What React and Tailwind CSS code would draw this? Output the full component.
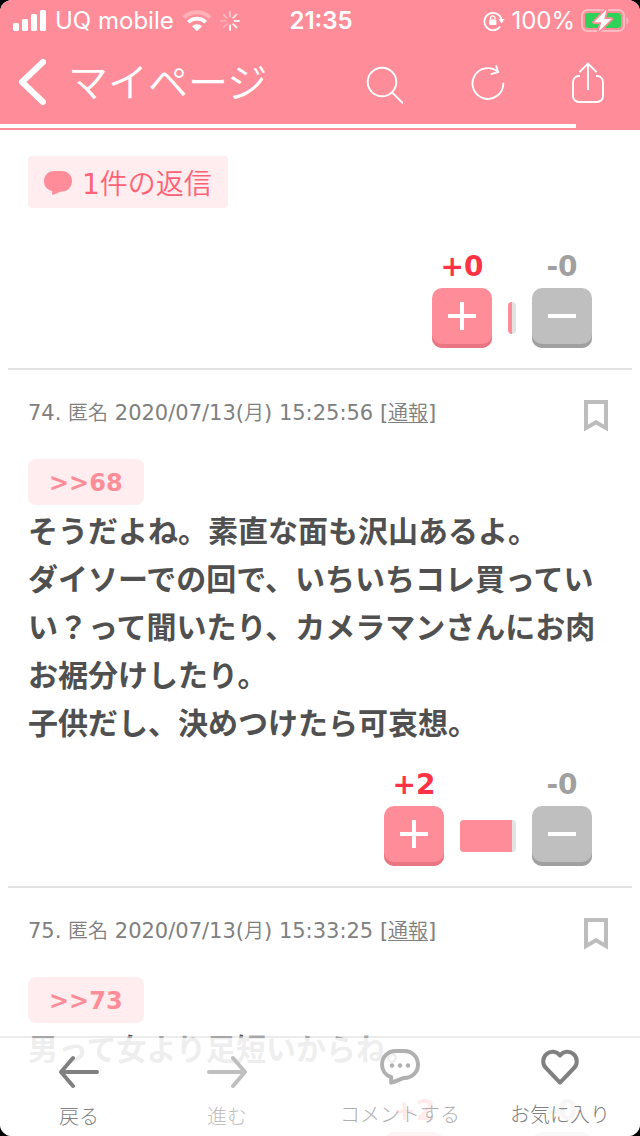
import React from "react";

const SANS = "font-['DejaVu_Sans','Noto_Sans_CJK_JP',sans-serif]";
const JP = "font-['Noto_Sans_CJK_JP',sans-serif]";

function SignalIcon() {
  return (
    <svg width="34" height="22" viewBox="0 0 34 22" fill="#fff" aria-hidden="true">
      <rect x="0" y="13" width="6" height="8" rx="1.5" />
      <rect x="9" y="9" width="6" height="12" rx="1.5" />
      <rect x="18" y="4" width="6" height="17" rx="1.5" />
      <rect x="27" y="0" width="6" height="21" rx="1.5" />
    </svg>
  );
}

function WifiIcon() {
  return (
    <svg width="30" height="22" viewBox="0 0 30 22" aria-hidden="true">
      <path d="M2 7.6a18.5 18.5 0 0 1 26 0" fill="none" stroke="#fff" strokeOpacity=".3" strokeWidth="4" />
      <path d="M6.3 12.2a12.3 12.3 0 0 1 17.4 0" fill="none" stroke="#fff" strokeWidth="3.6" />
      <path d="M10 16.2a7.2 7.2 0 0 1 10 0l-5 5z" fill="#fff" />
    </svg>
  );
}

function SpinnerIcon() {
  return (
    <svg width="20" height="20" viewBox="0 0 20 20" stroke="#fff" strokeWidth="1.8" strokeLinecap="round" aria-hidden="true">
      <path d="M10 1v4.6" opacity=".5" />
      <path d="M16.4 3.6l-3.2 3.2" opacity=".75" />
      <path d="M19 10h-4.6" opacity=".85" />
      <path d="M16.4 16.4l-3.2-3.2" opacity=".95" />
      <path d="M10 19v-4.6" />
      <path d="M3.6 16.4l3.2-3.2" opacity=".25" />
      <path d="M1 10h4.6" opacity=".25" />
      <path d="M3.6 3.6l3.2 3.2" opacity=".35" />
    </svg>
  );
}

function LockIcon() {
  return (
    <svg width="22" height="20" viewBox="0 0 22 20" fill="none" stroke="#fff" aria-hidden="true">
      <path d="M17.2 15.6A8.7 8.7 0 1 1 18.4 8" strokeWidth="1.8" />
      <path d="M15.4 8h6.2l-3 4.4z" fill="#fff" stroke="none" />
      <rect x="6.2" y="8.4" width="7.2" height="5.6" rx="1" fill="#fff" stroke="none" />
      <path d="M7.7 8.6V7a2.1 2.1 0 0 1 4.2 0v1.6" strokeWidth="1.3" />
    </svg>
  );
}

function BatteryIcon() {
  return (
    <svg width="48" height="24" viewBox="0 0 48 24" aria-hidden="true">
      <rect x="1" y="1" width="42" height="21" rx="5.5" fill="none" stroke="#fff" strokeOpacity=".4" strokeWidth="2" />
      <path d="M45.5 8.2c2.6 1 2.6 6 0 7z" fill="#fff" fillOpacity=".4" />
      <rect x="4" y="4" width="36" height="15" rx="3" fill="#30d158" />
      <path d="M25.6.4L13 13.2h7.4L17.6 22.6 30.4 10h-7.2z" fill="#fff" stroke="#ff8d99" strokeWidth="3.4" strokeLinejoin="round" paintOrder="stroke" />
    </svg>
  );
}

function StatusBar() {
  return (
    <div className="grid h-10 grid-cols-[1fr_auto_1fr] items-center pl-[13px] pr-[11px] pt-px font-['Inter',sans-serif] text-2xl text-white">
      <div className="flex items-center gap-2">
        <SignalIcon />
        <span>UQ mobile</span>
        <span className="flex items-center gap-2">
          <WifiIcon />
          <SpinnerIcon />
        </span>
      </div>
      <span className="font-semibold">21:35</span>
      <div className="flex items-center justify-end gap-1.5">
        <LockIcon />
        <span>100%</span>
        <BatteryIcon />
      </div>
    </div>
  );
}

function Header() {
  return (
    <header className="shrink-0 bg-[#ff8d99]">
      <StatusBar />
      <div className="flex h-[84px] items-center pl-[18px] pr-[35px] text-white">
        <button aria-label="戻る" className="mr-[22px]">
          <svg width="28" height="48" viewBox="0 0 28 48" fill="none" stroke="#fff" strokeWidth="6" strokeLinecap="round" strokeLinejoin="round">
            <path d="M25 4L4 24l21 20" />
          </svg>
        </button>
        <h1 className={`${JP} pb-1 text-[40px] leading-[48px] font-[350]`}>マイページ</h1>
        <div className="ml-auto flex items-center gap-[66px]">
          <button aria-label="検索">
            <svg width="44" height="46" viewBox="0 0 44 46" fill="none" stroke="#fff" strokeWidth="1.9">
              <circle cx="23" cy="23" r="14.3" />
              <path d="M32.8 33.2L44 44.4" />
            </svg>
          </button>
          <button aria-label="再読み込み">
            <svg width="36" height="38" viewBox="0 0 36 38" fill="none" stroke="#fff" strokeWidth="1.9" strokeLinecap="round">
              <path d="M34.300 20.500A15.400 15.400 0 1 1 29 8.900" />
              <path d="M27.200 3l2 6-6.800 2.200" />
            </svg>
          </button>
          <button aria-label="共有">
            <svg width="34" height="44" viewBox="0 -2 34 44" fill="none" stroke="#fff" strokeWidth="1.9">
              <path d="M9 14H7.6A6.1 6.1 0 0 0 2 20v14a6 6 0 0 0 6 6h18a6 6 0 0 0 6-6V20a6.1 6.1 0 0 0-5.6-6H25" />
              <path d="M17 28V1.5M8.4 10.2L17 1.6l8.6 8.6" />
            </svg>
          </button>
        </div>
      </div>
      <div className="h-1.5">
        <div className="h-1 w-[90%] bg-white" />
      </div>
    </header>
  );
}

function Votes({ plus, minus, wide }) {
  const base = "flex h-[60px] w-[60px] items-center justify-center rounded-[10px] pb-1";
  return (
    <div className="flex items-end justify-end gap-4 pr-5 pb-5">
      <div className="flex w-[60px] flex-col items-center gap-1">
        <span className={`${SANS} text-[28px] leading-[34px] font-bold text-[#ff3344]`}>{plus}</span>
        <button aria-label="プラス" className={`${base} bg-[#ff8d99] shadow-[inset_0_-4px_0_#e97683]`}>
          <svg width="28" height="28" viewBox="0 0 28 28" fill="#fff">
            <path d="M12 0h4v12h12v4H16v12h-4V16H0v-4h12z" />
          </svg>
        </button>
      </div>
      <div className={`mb-3.5 flex h-8 overflow-hidden rounded bg-[#e2e2e2] ${wide ? "w-14" : "w-2"}`}>
        <div className="mr-1 grow bg-[#ff8d99]" />
      </div>
      <div className="flex w-[60px] flex-col items-center gap-1">
        <span className={`${SANS} text-[28px] leading-[34px] font-bold text-[#a0a0a0]`}>{minus}</span>
        <button aria-label="マイナス" className={`${base} bg-[#bfbfbf] shadow-[inset_0_-4px_0_#a0a0a0]`}>
          <svg width="28" height="28" viewBox="0 0 28 28" fill="#fff">
            <path d="M0 12h28v4H0z" />
          </svg>
        </button>
      </div>
    </div>
  );
}

function Kanji({ children }) {
  return <span className={`${JP} text-xl leading-none font-[350]`}>{children}</span>;
}

function Comment({ number, time, anchor, lines }) {
  return (
    <article className="mx-2 border-b-2 border-[#e2e2e2] px-5 pt-[30px]">
      <div className="flex h-8 items-start justify-between pr-1">
        <p className={`${SANS} text-[21px] leading-[26px] text-[#808080]`}>
          {number}. <Kanji>匿名</Kanji> 2020/07/13(<Kanji>月</Kanji>) {time} [
          <a href="#report" className="underline decoration-1 underline-offset-2"><Kanji>通報</Kanji></a>]
        </p>
        <button aria-label="ブックマーク">
          <svg width="24" height="32" viewBox="0 0 24 32" fill="none" stroke="#bdbdbd" strokeWidth="4">
            <path d="M2 2h20v26l-10-5.8L2 28z" />
          </svg>
        </button>
      </div>
      <a href="#anchor" className={`${SANS} mt-[27px] flex h-[46px] w-fit items-center rounded-lg bg-[#ffedef] px-[21px] pt-0.5 text-2xl font-bold text-[#ff8d99]`}>
        {anchor}
      </a>
      <div className={`${JP} mb-[23px] text-[30px] leading-[48px] font-bold text-[#505050]`}>
        {lines.map((line) => (
          <p key={line}>{line}</p>
        ))}
      </div>
      <Votes plus="+2" minus="-0" wide />
    </article>
  );
}

function ToolItem({ label, tone, children, raised }) {
  return (
    <button className={`flex flex-col items-center ${raised ? "gap-3.5 pt-2.5" : "gap-3 pt-3.5"} ${tone}`}>
      {children}
      <span className={`${JP} text-xl leading-7 font-light whitespace-nowrap`}>{label}</span>
    </button>
  );
}

function Toolbar() {
  return (
    <nav className="absolute inset-x-0 bottom-0 grid h-[100px] grid-cols-[158fr_138fr_208fr_112fr] items-start border-t-2 border-[#e0e0e0]/60 bg-white/90 bg-clip-padding pr-6">
      <ToolItem label="戻る" tone="text-[#808080]">
        <svg width="40" height="38" viewBox="0 0 40 38" fill="none" stroke="currentColor" strokeWidth="4" strokeLinecap="round" strokeLinejoin="round">
          <path d="M38 20H2M14 6L2 20l12 14" />
        </svg>
      </ToolItem>
      <ToolItem label="進む" tone="text-[#bfbfbf]">
        <svg width="40" height="38" viewBox="0 0 40 38" fill="none" stroke="currentColor" strokeWidth="4" strokeLinecap="round" strokeLinejoin="round">
          <path d="M2 20h36M26 6l12 14-12 14" />
        </svg>
      </ToolItem>
      <ToolItem label="コメントする" tone="text-[#b0b0b0]" raised>
        <svg width="40" height="38" viewBox="0 0 40 38" fill="none" stroke="currentColor" strokeWidth="4" strokeLinejoin="round">
          <path d="M16 3h8c8 0 14 5.800 14 13.500S32 30 24 30c-3 .3-6.500 3.200-12.800 4.600V29C5.500 27.500 2 22.500 2 16.500 2 8.800 8 3 16 3z" />
          <g fill="currentColor" stroke="none">
            <circle cx="12" cy="17.500" r="2.200" />
            <circle cx="20" cy="17.500" r="2.200" />
            <circle cx="28" cy="17.500" r="2.200" />
          </g>
        </svg>
      </ToolItem>
      <ToolItem label="お気に入り" tone="text-[#808080]" raised>
        <svg width="38" height="38" viewBox="0 0 38 38" fill="none" stroke="currentColor" strokeWidth="4" strokeLinejoin="round">
          <path d="M19 7.500C15.500 2.800 9 2.800 5.300 6.300 1.200 10.200 1.300 16.300 5 20l14 14.600L33 20c3.700-3.700 3.800-9.800-.3-13.700C29 2.800 22.500 2.800 19 7.500z" />
        </svg>
      </ToolItem>
    </nav>
  );
}

export default function App() {
  return (
    <div className="h-screen bg-black">
      <div className="relative flex h-full flex-col overflow-hidden rounded-xl bg-white">
        <Header />
        <main className="min-h-0 grow overflow-hidden">
          <section className="mx-2 border-b-2 border-[#e2e2e2] px-5 pt-[26px]">
            <a href="#replies" className="mb-[42px] flex h-[52px] w-fit items-center gap-2.5 rounded bg-[#ffedef] px-4 text-[28px] text-[#ff6375]">
              <svg width="28" height="26" viewBox="0 -2 28 26" fill="#ff8d99" aria-hidden="true">
                <path d="M10 0h8c5.800 0 10 4.500 10 10S24 20.500 18 20.500c-3 .3-5 2.200-9.800 3.500V20C3.500 19 0 15.500 0 10.500 0 4.500 4.200 0 10 0z" />
              </svg>
              <span className={`${SANS} pt-1.5 leading-9`}>
                1<span className={`${JP} leading-none font-[350]`}>件の返信</span>
              </span>
            </a>
            <Votes plus="+0" minus="-0" />
          </section>
          <Comment
            number={74}
            time="15:25:56"
            anchor=">>68"
            lines={[
              "そうだよね。素直な面も沢山あるよ。",
              "ダイソーでの回で、いちいちコレ買っていい？って聞いたり、カメラマンさんにお肉お裾分けしたり。",
              "子供だし、決めつけたら可哀想。",
            ]}
          />
          <Comment number={75} time="15:33:25" anchor=">>73" lines={["男って女より足短いからね。"]} />
        </main>
        <Toolbar />
      </div>
    </div>
  );
}
